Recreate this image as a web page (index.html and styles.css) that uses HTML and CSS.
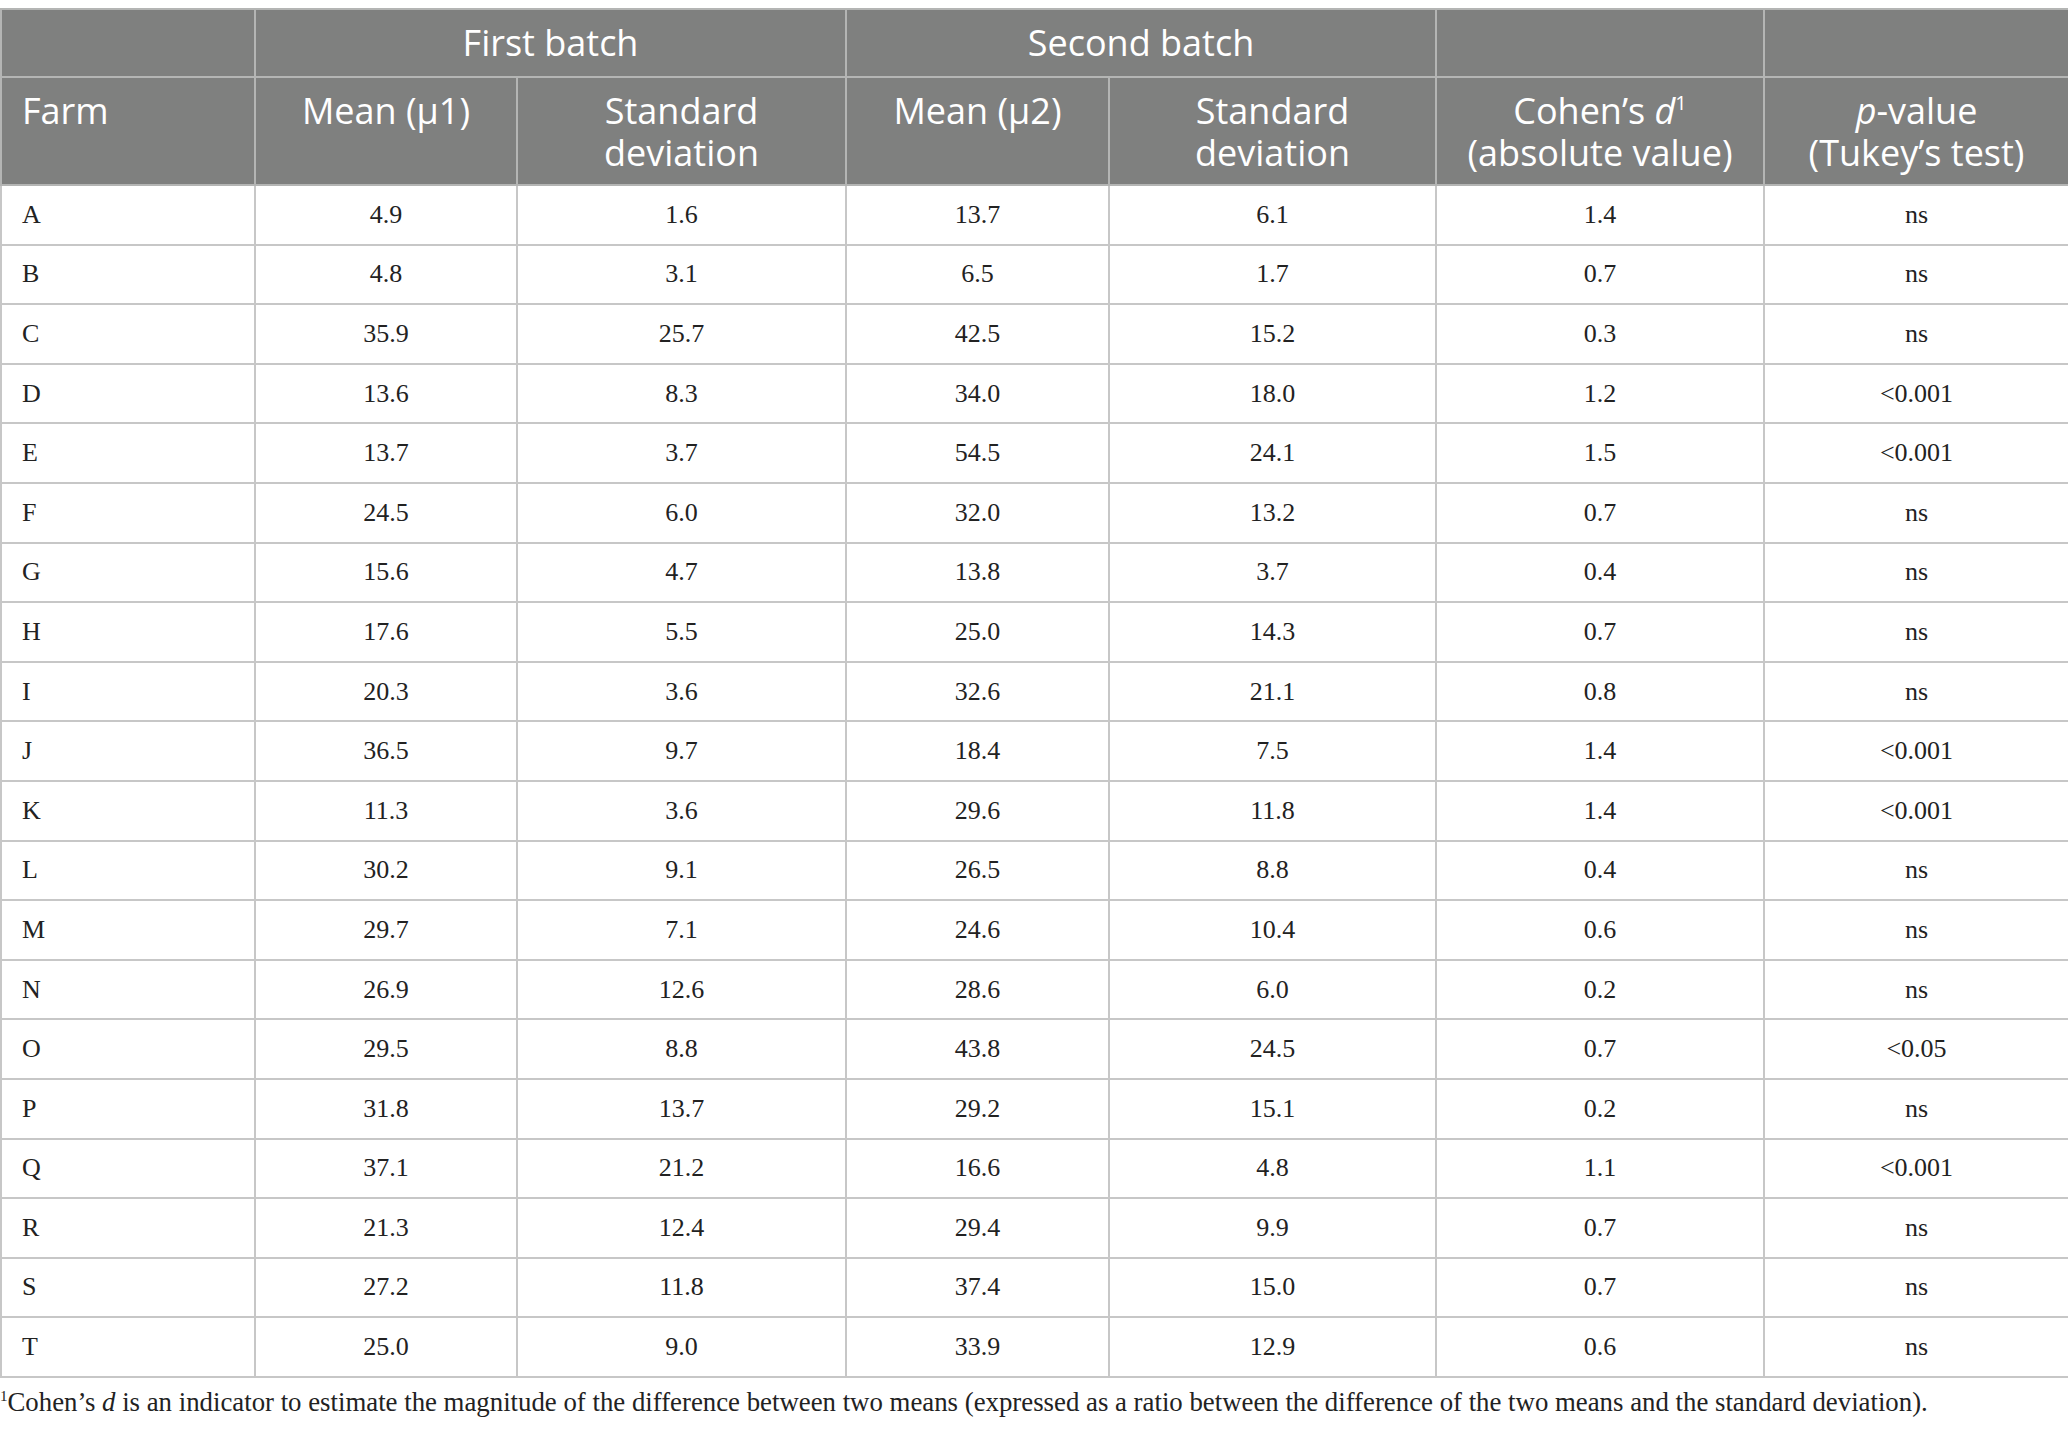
FILE: index.html
```html
<!DOCTYPE html>
<html lang="en">
<head>
<meta charset="utf-8">
<title>Table</title>
<link rel="stylesheet" href="styles.css">
</head>
<body>
<div class="page">
<table class="data">
<colgroup>
<col class="c-farm"><col class="c-m1"><col class="c-s1"><col class="c-m2"><col class="c-s2"><col class="c-d"><col class="c-p">
</colgroup>
<thead>
<tr class="h1">
<th></th>
<th colspan="2">First batch</th>
<th colspan="2">Second batch</th>
<th></th>
<th></th>
</tr>
<tr class="h2">
<th class="left">Farm</th>
<th>Mean (μ1)</th>
<th>Standard<br>deviation</th>
<th>Mean (μ2)</th>
<th>Standard<br>deviation</th>
<th>Cohen’s <i>d</i><sup>1</sup><br>(absolute value)</th>
<th><i>p</i>-value<br>(Tukey’s test)</th>
</tr>
</thead>
<tbody>
<tr><td class="left">A</td><td>4.9</td><td>1.6</td><td>13.7</td><td>6.1</td><td>1.4</td><td>ns</td></tr>
<tr><td class="left">B</td><td>4.8</td><td>3.1</td><td>6.5</td><td>1.7</td><td>0.7</td><td>ns</td></tr>
<tr><td class="left">C</td><td>35.9</td><td>25.7</td><td>42.5</td><td>15.2</td><td>0.3</td><td>ns</td></tr>
<tr><td class="left">D</td><td>13.6</td><td>8.3</td><td>34.0</td><td>18.0</td><td>1.2</td><td>&lt;0.001</td></tr>
<tr><td class="left">E</td><td>13.7</td><td>3.7</td><td>54.5</td><td>24.1</td><td>1.5</td><td>&lt;0.001</td></tr>
<tr><td class="left">F</td><td>24.5</td><td>6.0</td><td>32.0</td><td>13.2</td><td>0.7</td><td>ns</td></tr>
<tr><td class="left">G</td><td>15.6</td><td>4.7</td><td>13.8</td><td>3.7</td><td>0.4</td><td>ns</td></tr>
<tr><td class="left">H</td><td>17.6</td><td>5.5</td><td>25.0</td><td>14.3</td><td>0.7</td><td>ns</td></tr>
<tr><td class="left">I</td><td>20.3</td><td>3.6</td><td>32.6</td><td>21.1</td><td>0.8</td><td>ns</td></tr>
<tr><td class="left">J</td><td>36.5</td><td>9.7</td><td>18.4</td><td>7.5</td><td>1.4</td><td>&lt;0.001</td></tr>
<tr><td class="left">K</td><td>11.3</td><td>3.6</td><td>29.6</td><td>11.8</td><td>1.4</td><td>&lt;0.001</td></tr>
<tr><td class="left">L</td><td>30.2</td><td>9.1</td><td>26.5</td><td>8.8</td><td>0.4</td><td>ns</td></tr>
<tr><td class="left">M</td><td>29.7</td><td>7.1</td><td>24.6</td><td>10.4</td><td>0.6</td><td>ns</td></tr>
<tr><td class="left">N</td><td>26.9</td><td>12.6</td><td>28.6</td><td>6.0</td><td>0.2</td><td>ns</td></tr>
<tr><td class="left">O</td><td>29.5</td><td>8.8</td><td>43.8</td><td>24.5</td><td>0.7</td><td>&lt;0.05</td></tr>
<tr><td class="left">P</td><td>31.8</td><td>13.7</td><td>29.2</td><td>15.1</td><td>0.2</td><td>ns</td></tr>
<tr><td class="left">Q</td><td>37.1</td><td>21.2</td><td>16.6</td><td>4.8</td><td>1.1</td><td>&lt;0.001</td></tr>
<tr><td class="left">R</td><td>21.3</td><td>12.4</td><td>29.4</td><td>9.9</td><td>0.7</td><td>ns</td></tr>
<tr><td class="left">S</td><td>27.2</td><td>11.8</td><td>37.4</td><td>15.0</td><td>0.7</td><td>ns</td></tr>
<tr><td class="left">T</td><td>25.0</td><td>9.0</td><td>33.9</td><td>12.9</td><td>0.6</td><td>ns</td></tr>
</tbody>
</table>
<p class="foot"><sup>1</sup>Cohen’s <i>d</i> is an indicator to estimate the magnitude of the difference between two means (expressed as a ratio between the difference of the two means and the standard deviation).</p>
</div>
</body>
</html>
```

FILE: styles.css
```css
html, body {
  margin: 0;
  padding: 0;
  background: #ffffff;
}

.page {
  padding-top: 8px;
}

.data {
  width: 2068px;
  border-collapse: collapse;
  table-layout: fixed;
}

.c-farm { width: 254px; }
.c-m1 { width: 262px; }
.c-s1 { width: 329px; }
.c-m2 { width: 263px; }
.c-s2 { width: 327px; }
.c-d { width: 328px; }
.c-p { width: 305px; }

.data th {
  background: #7f807f;
  color: #ffffff;
  font-family: "Open Sans", "Noto Sans", sans-serif;
  font-weight: 400;
  font-size: 36px;
  line-height: 42px;
  border: 2px solid #b4b5b4;
  text-align: center;
  box-sizing: border-box;
}

.data .h1 th {
  height: 68px;
  padding: 0 20px;
  vertical-align: middle;
}

.data .h2 th {
  height: 108px;
  padding: 12px 20px 10px;
  vertical-align: top;
}

.data th sup {
  font-size: 20px;
  line-height: 0;
  vertical-align: 14px;
}

.data td {
  height: 59.6px;
  padding: 0 20px;
  box-sizing: border-box;
  border: 2px solid #c7c7c7;
  font-family: "Liberation Serif", "Times New Roman", serif;
  font-size: 26px;
  color: #222222;
  text-align: center;
  vertical-align: middle;
}

.data .left {
  text-align: left;
}

.foot {
  margin: 0;
  padding: 9px 0 0 0;
  font-family: "Liberation Serif", "Times New Roman", serif;
  font-size: 26.8px;
  line-height: 30px;
  color: #222222;
  white-space: nowrap;
}

.foot sup {
  font-size: 15px;
  line-height: 0;
  vertical-align: 10px;
}
```
